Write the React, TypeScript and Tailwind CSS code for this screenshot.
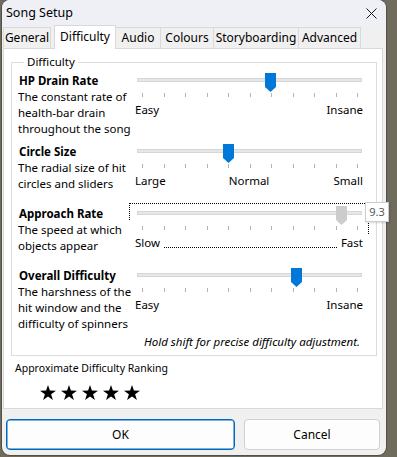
import React from "react";

// 難易度スライダー1本分
type SliderProps = {
  thumb: number;
  labels: [string, string, string];
  focused?: boolean;
  tooltip?: string;
};

function Thumb({ color }: { color: string }) {
  return (
    <svg width="11" height="19" viewBox="0 0 11 19">
      <path d="M0 0 H11 V14 L5.5 19 L0 14 Z" fill={color} />
    </svg>
  );
}

function Slider({ thumb, labels, focused, tooltip }: SliderProps) {
  return (
    <div className="relative w-[240px]">
      {focused && (
        <>
          <div className="absolute -top-[3px] left-0 right-0 h-[45px] border-t border-r border-b border-dotted border-black" />
          <div className="absolute -top-[3px] left-0 h-[17px] border-l border-dotted border-black" />
        </>
      )}
      <div className="relative h-[20px]">
        <div className="absolute left-[8px] right-[7px] top-[5px] h-[4px] border border-[#d6d6d6] bg-[#e7e7e7]" />
        <div className="absolute top-0" style={{ left: thumb }}>
          <Thumb color={focused ? "#cccccc" : "#0078d7"} />
        </div>
      </div>
      <div className="flex h-[4px] w-[216px] ml-[13px] justify-between">
        {Array.from({ length: 11 }).map((_, i) => (
          <div key={i} className="w-px h-[4px] bg-[#b4b4b4]" />
        ))}
      </div>
      <div className="relative z-10 mt-[5px] grid grid-cols-3 leading-[16px]">
        <div className="text-left">
          <span className="bg-white pl-[6px] pr-[4px]">{labels[0]}</span>
        </div>
        <div className="text-center">{labels[1]}</div>
        <div className="text-right">
          <span className="bg-white pl-[4px] pr-[6px]">{labels[2]}</span>
        </div>
      </div>
      {tooltip && (
        <div className="absolute z-20 -top-[4px] left-[236px] flex h-[20px] w-[24px] items-center justify-center border border-[#cccccc] bg-white text-[11px] text-[#575757] shadow-[1px_1px_2px_rgba(0,0,0,0.15)]">
          {tooltip}
        </div>
      )}
    </div>
  );
}

const ROWS = [
  {
    title: "HP Drain Rate",
    desc: ["The constant rate of", "health-bar drain", "throughout the song"],
    thumb: 136,
    labels: ["Easy", "", "Insane"] as [string, string, string],
    h: "h-[71px]",
  },
  {
    title: "Circle Size",
    desc: ["The radial size of hit", "circles and sliders"],
    thumb: 94,
    labels: ["Large", "Normal", "Small"] as [string, string, string],
    h: "h-[62px]",
  },
  {
    title: "Approach Rate",
    desc: ["The speed at which", "objects appear"],
    thumb: 207,
    labels: ["Slow", "", "Fast"] as [string, string, string],
    h: "h-[62px]",
    focused: true,
    tooltip: "9.3",
  },
  {
    title: "Overall Difficulty",
    desc: ["The harshness of the", "hit window and the", "difficulty of spinners"],
    thumb: 162,
    labels: ["Easy", "", "Insane"] as [string, string, string],
    h: "h-[66px]",
  },
];

const TABS = [
  { name: "General", w: "w-[48px]" },
  { name: "Difficulty", w: "w-[62px]" },
  { name: "Audio", w: "w-[46px]" },
  { name: "Colours", w: "w-[54px]" },
  { name: "Storyboarding", w: "w-[86px]" },
  { name: "Advanced", w: "w-[63px]" },
];

function Star() {
  return (
    <svg width="16" height="15" viewBox="0 0 16 15">
      <polygon
        points="8,0 9.9,5.6 16,5.7 11.1,9.2 12.9,15 8,11.5 3.1,15 4.9,9.2 0,5.7 6.1,5.6"
        fill="#000"
      />
    </svg>
  );
}

export default function App() {
  return (
    <div className="h-[457px] w-[397px] overflow-hidden bg-[#6f6b5d] font-['Noto_Sans',sans-serif] text-[11.5px] text-black">
      <div className="ml-[2px] flex h-[455px] w-[384px] flex-col rounded-[8px] bg-[#f0f0f0] shadow-[0_0_0_1px_rgba(0,0,0,0.25)]">
        {/* タイトルバー */}
        <div className="flex h-[26px] items-center justify-between rounded-t-[8px] bg-[#eef0f6] pl-[4px] pr-[9px]">
          <span className="text-[12.5px]">Song Setup</span>
          <svg width="11" height="11" viewBox="0 0 11 11">
            <path d="M0.5 0.5 L10.5 10.5 M10.5 0.5 L0.5 10.5" stroke="#1a1a1a" strokeWidth="1" />
          </svg>
        </div>

        {/* タブ */}
        <div className="flex h-[22px] items-end pl-[1px] text-[12px]">
          {TABS.map((t, i) => {
            const sel = t.name === "Difficulty";
            return (
              <div
                key={t.name}
                className={`${t.w} flex items-center justify-center border-l border-r border-t border-[#d9d9d9] ${
                  sel
                    ? "relative z-10 -mb-px h-[24px] bg-white pb-[2px]"
                    : "h-[21px] bg-[#f0f0f0]"
                } ${i === 1 ? "ml-[3px]" : ""} ${i > 1 ? "-ml-px" : ""}`}
              >
                {t.name}
              </div>
            );
          })}
        </div>

        {/* タブ本体 */}
        <div className="ml-[1px] h-[361px] w-[380px] border border-[#d9d9d9] bg-white">
          <fieldset className="ml-[7px] mt-[5px] w-[366px] border border-[#dcdcdc] px-[7px] pb-[5px]">
            <legend className="ml-[5px] px-[3px] leading-[16px]">Difficulty</legend>
            <div className="pt-[3px]">
              {ROWS.map((r) => (
                <div key={r.title} className={`flex ${r.h}`}>
                  <div className="w-[110px] whitespace-nowrap">
                    <div className="font-bold leading-[16px]">{r.title}</div>
                    {r.desc.map((d) => (
                      <div key={d} className="-ml-px leading-[16px]">
                        {d}
                      </div>
                    ))}
                  </div>
                  <Slider thumb={r.thumb} labels={r.labels} focused={r.focused} tooltip={r.tooltip} />
                </div>
              ))}
              <div className="pr-[9px] text-right italic leading-[16px]">
                Hold shift for precise difficulty adjustment.
              </div>
            </div>
          </fieldset>
          <div className="ml-[11px] mt-[4px] text-[10.5px] leading-[16px]">Approximate Difficulty Ranking</div>
          <div className="ml-[36px] mt-[9px] flex gap-[5px]">
            {Array.from({ length: 5 }).map((_, i) => (
              <Star key={i} />
            ))}
          </div>
        </div>

        {/* ボタン */}
        <div className="flex gap-[9px] pl-[4px] pt-[10px] text-[12px]">
          <button className="h-[31px] w-[229px] rounded-[4px] border border-[#0067c0] bg-[#fdfdfd] shadow-[inset_0_0_0_0.5px_#0067c0]">
            OK
          </button>
          <button className="h-[31px] w-[136px] rounded-[4px] border border-[#d0d0d0] bg-[#fdfdfd]">
            Cancel
          </button>
        </div>
      </div>
    </div>
  );
}
